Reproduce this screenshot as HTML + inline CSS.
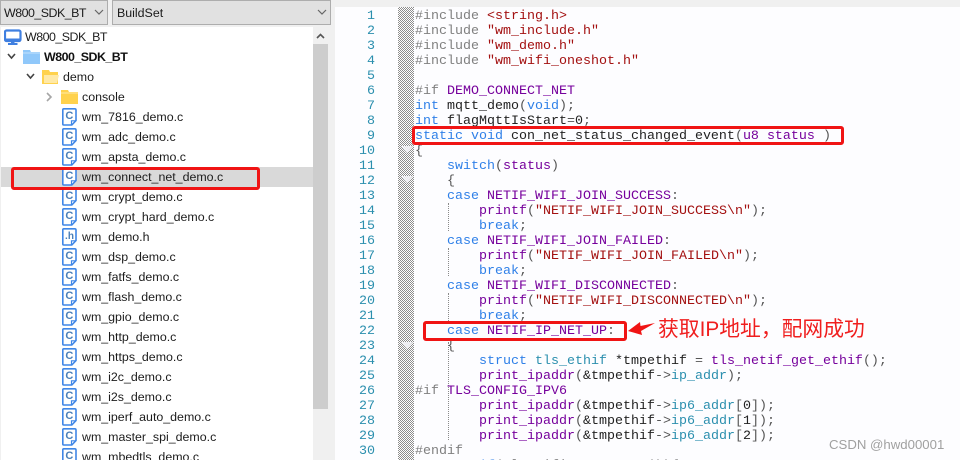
<!DOCTYPE html>
<html><head><meta charset="utf-8"><style>
html,body{margin:0;padding:0;overflow:hidden}
body{width:960px;height:460px;position:relative;overflow:hidden;background:#f0f0f0;font-family:"Liberation Sans","Noto Sans CJK SC",sans-serif}
.a{position:absolute}
.dd{position:absolute;top:0;height:23px;background:#e1e1e1;border:1px solid #adadad;font-size:12.4px;line-height:25px;color:#1a1a1a;box-sizing:content-box}
#tree{position:absolute;left:1px;top:27px;width:312px;height:433px;background:#fff}
.r{position:absolute;height:20px;line-height:22px;font-size:12.4px;color:#1c1c1c;white-space:pre}
.u{letter-spacing:-.5px}
.i{position:absolute;left:62px;width:15px;height:18px}
#ed{position:absolute;left:335px;top:7px;width:625px;height:453px;background:#fdfdff}
#hatch{position:absolute;left:398px;top:7px;width:16px;height:453px;background:repeating-conic-gradient(#8c8c8c 0 25%,#fff 0 50%) 0 0/2px 2px}
pre{margin:0;position:absolute;font-family:"Liberation Mono",monospace;font-size:13.33px;line-height:15px}
#nums{left:351px;top:9px;width:24px;text-align:right;color:#2b8fae}
#code{left:415px;top:9px;color:#222;height:451px;overflow:hidden;width:545px}
.p{color:#808080}.s{color:#a31010}.k{color:#2f80e8}.f{color:#76009c}.m{color:#2b8fae}.g{color:#555}
.b{position:absolute;border:3px solid #f01414;border-radius:3px;box-sizing:border-box}
.d{position:absolute;left:448px;width:0;border-left:1px dotted #8a8a8a}
.t{position:absolute;left:401px;width:0;height:0;border-left:6px solid transparent;border-right:6px solid transparent;border-top:7px solid #efeff3}
</style></head><body>
<svg width="0" height="0" style="position:absolute"><defs>
<symbol id="fc" viewBox="0 0 15 18"><path d="M1.800 .8H12.700Q14 .8 14 2.100V12.500L9.800 17H1.800Q.8 17 .8 16V1.800Q.8 .8 1.800 .8Z" fill="#fff" stroke="#3f86e6" stroke-width="1.600"/><path d="M9.500 16.800V12.800H13.800" fill="none" stroke="#3f86e6" stroke-width="1.200"/><text x="7.400" y="11" font-family="Liberation Sans" font-size="11" font-weight="bold" fill="#4a7fb8" text-anchor="middle">C</text></symbol>
<symbol id="fh" viewBox="0 0 15 18"><path d="M1.800 .8H12.700Q14 .8 14 2.100V12.500L9.800 17H1.800Q.8 17 .8 16V1.800Q.8 .8 1.800 .8Z" fill="#fff" stroke="#3f86e6" stroke-width="1.600"/><path d="M9.500 16.800V12.800H13.800" fill="none" stroke="#3f86e6" stroke-width="1.200"/><text x="7.500" y="11" font-family="Liberation Sans" font-size="10" font-weight="bold" fill="#4a7fb8" text-anchor="middle">.h</text></symbol>
</defs></svg>

<div class="dd u" style="left:0;width:106px;text-indent:3px">W800_SDK_BT</div>
<svg class="a" style="left:94px;top:9px" width="10" height="7"><path d="M1 1L5 5L9 1" fill="none" stroke="#666" stroke-width="1.2"/></svg>
<div class="dd" style="left:112px;width:217px;text-indent:4px">BuildSet</div>
<svg class="a" style="left:317px;top:9px" width="10" height="7"><path d="M1 1L5 5L9 1" fill="none" stroke="#666" stroke-width="1.2"/></svg>

<div id="tree"></div>
<div class="a" style="left:1px;top:167px;width:312px;height:20px;background:#d9d9d9"></div>
<div class="a" style="left:313px;top:27px;width:15px;height:433px;background:#f0f0f0"></div>
<div class="a" style="left:313px;top:44px;width:15px;height:365px;background:#cdcdcd"></div>
<svg class="a" style="left:316px;top:33px" width="9" height="6"><path d="M1 5L4.500 1.500L8 5" fill="none" stroke="#555" stroke-width="1.600"/></svg>

<svg class="a" style="left:4px;top:29px" width="18" height="17"><rect x="1" y="1.500" width="15.500" height="10.500" rx="1.500" fill="#fff" stroke="#3f7fe0" stroke-width="2.200"/><rect x="1" y="9.500" width="15.500" height="3" fill="#3f7fe0"/><rect x="7" y="12" width="3.500" height="2.500" fill="#3f7fe0"/><rect x="4" y="14" width="9.500" height="2" fill="#3f7fe0"/></svg>
<div class="r u" style="left:25px;top:26px">W800_SDK_BT</div>

<svg class="a" style="left:7px;top:53px" width="9" height="7"><path d="M1 1L4.500 5L8 1" fill="none" stroke="#444" stroke-width="1.600"/></svg>
<svg class="a" style="left:23px;top:49px" width="17" height="15"><path d="M0 1H7L8 3H17V15H0Z" fill="#90c8fa"/><path d="M0 4H17" stroke="#c4e2fc"/></svg>
<div class="r u" style="left:44px;top:46px;font-weight:bold;color:#111">W800_SDK_BT</div>

<svg class="a" style="left:26px;top:73px" width="9" height="7"><path d="M1 1L4.500 5L8 1" fill="none" stroke="#444" stroke-width="1.600"/></svg>
<svg class="a" style="left:42px;top:69px" width="17" height="15"><path d="M0 1H7L8 3H16V15H0Z" fill="#ffd24d"/><path d="M2 6H17L15 14H2Z" fill="#ffe9a6"/></svg>
<div class="r" style="left:63px;top:66px">demo</div>

<svg class="a" style="left:46px;top:92px" width="7" height="10"><path d="M1 1L5 5L1 9" fill="none" stroke="#a6a6a6" stroke-width="1.600"/></svg>
<svg class="a" style="left:61px;top:89px" width="17" height="15"><path d="M0 1H7L8 3H17V15H0Z" fill="#ffd24d"/><path d="M0 4H17" stroke="#ffe9a6"/></svg>
<div class="r" style="left:82px;top:86px">console</div>

<svg class="i" style="top:108px"><use href="#fc"/></svg><div class="r" style="left:82px;top:106px">wm_7816_demo.c</div>
<svg class="i" style="top:128px"><use href="#fc"/></svg><div class="r" style="left:82px;top:126px">wm_adc_demo.c</div>
<svg class="i" style="top:148px"><use href="#fc"/></svg><div class="r" style="left:82px;top:146px">wm_apsta_demo.c</div>
<svg class="i" style="top:168px"><use href="#fc"/></svg><div class="r" style="left:82px;top:166px">wm_connect_net_demo.c</div>
<svg class="i" style="top:188px"><use href="#fc"/></svg><div class="r" style="left:82px;top:186px">wm_crypt_demo.c</div>
<svg class="i" style="top:208px"><use href="#fc"/></svg><div class="r" style="left:82px;top:206px">wm_crypt_hard_demo.c</div>
<svg class="i" style="top:228px"><use href="#fh"/></svg><div class="r" style="left:82px;top:226px">wm_demo.h</div>
<svg class="i" style="top:248px"><use href="#fc"/></svg><div class="r" style="left:82px;top:246px">wm_dsp_demo.c</div>
<svg class="i" style="top:268px"><use href="#fc"/></svg><div class="r" style="left:82px;top:266px">wm_fatfs_demo.c</div>
<svg class="i" style="top:288px"><use href="#fc"/></svg><div class="r" style="left:82px;top:286px">wm_flash_demo.c</div>
<svg class="i" style="top:308px"><use href="#fc"/></svg><div class="r" style="left:82px;top:306px">wm_gpio_demo.c</div>
<svg class="i" style="top:328px"><use href="#fc"/></svg><div class="r" style="left:82px;top:326px">wm_http_demo.c</div>
<svg class="i" style="top:348px"><use href="#fc"/></svg><div class="r" style="left:82px;top:346px">wm_https_demo.c</div>
<svg class="i" style="top:368px"><use href="#fc"/></svg><div class="r" style="left:82px;top:366px">wm_i2c_demo.c</div>
<svg class="i" style="top:388px"><use href="#fc"/></svg><div class="r" style="left:82px;top:386px">wm_i2s_demo.c</div>
<svg class="i" style="top:408px"><use href="#fc"/></svg><div class="r" style="left:82px;top:406px">wm_iperf_auto_demo.c</div>
<svg class="i" style="top:428px"><use href="#fc"/></svg><div class="r" style="left:82px;top:426px">wm_master_spi_demo.c</div>
<svg class="i" style="top:448px"><use href="#fc"/></svg><div class="r" style="left:82px;top:446px">wm_mbedtls_demo.c</div>

<div class="b" style="left:11px;top:167px;width:249px;height:23px"></div>

<div id="ed"></div>
<div id="hatch"></div>
<div class="t" style="top:146px"></div>
<div class="t" style="top:176px"></div>
<div class="t" style="top:342px"></div>

<pre id="nums">1
2
3
4
5
6
7
8
9
10
11
12
13
14
15
16
17
18
19
20
21
22
23
24
25
26
27
28
29
30</pre>

<div class="d" style="top:203px;height:28px"></div>
<div class="d" style="top:248px;height:28px"></div>
<div class="d" style="top:293px;height:28px"></div>
<div class="d" style="top:342px;height:98px"></div>

<pre id="code"><span class="p">#include </span><span class="s">&lt;string.h&gt;</span>
<span class="p">#include </span><span class="s">"wm_include.h"</span>
<span class="p">#include </span><span class="s">"wm_demo.h"</span>
<span class="p">#include </span><span class="s">"wm_wifi_oneshot.h"</span>

<span class="p">#if </span><span class="f">DEMO_CONNECT_NET</span>
<span class="k">int</span> mqtt_demo<span class="g">(</span><span class="k">void</span><span class="g">);</span>
<span class="k">int</span> flagMqttIsStart<span class="g">=</span>0<span class="g">;</span>
<span class="k">static void</span> con_net_status_changed_event<span class="g">(</span><span class="f">u8</span> <span class="f">status</span> <span class="g">)</span>
<span class="g">{</span>
    <span class="k">switch</span><span class="g">(</span><span class="f">status</span><span class="g">)</span>
    <span class="g">{</span>
    <span class="k">case</span> <span class="f">NETIF_WIFI_JOIN_SUCCESS</span><span class="g">:</span>
        <span class="f">printf</span><span class="g">(</span><span class="s">"NETIF_WIFI_JOIN_SUCCESS\n"</span><span class="g">);</span>
        <span class="k">break</span><span class="g">;</span>
    <span class="k">case</span> <span class="f">NETIF_WIFI_JOIN_FAILED</span><span class="g">:</span>
        <span class="f">printf</span><span class="g">(</span><span class="s">"NETIF_WIFI_JOIN_FAILED\n"</span><span class="g">);</span>
        <span class="k">break</span><span class="g">;</span>
    <span class="k">case</span> <span class="f">NETIF_WIFI_DISCONNECTED</span><span class="g">:</span>
        <span class="f">printf</span><span class="g">(</span><span class="s">"NETIF_WIFI_DISCONNECTED\n"</span><span class="g">);</span>
        <span class="k">break</span><span class="g">;</span>
    <span class="k">case</span> <span class="f">NETIF_IP_NET_UP</span><span class="g">:</span>
    <span class="g">{</span>
        <span class="k">struct</span> <span class="m">tls_ethif</span> *tmpethif <span class="g">=</span> <span class="f">tls_netif_get_ethif</span><span class="g">();</span>
        <span class="f">print_ipaddr</span><span class="g">(</span>&amp;tmpethif<span class="g">-&gt;</span><span class="m">ip_addr</span><span class="g">);</span>
<span class="p">#if </span><span class="f">TLS_CONFIG_IPV6</span>
        <span class="f">print_ipaddr</span><span class="g">(</span>&amp;tmpethif<span class="g">-&gt;</span><span class="m">ip6_addr</span><span class="g">[</span>0<span class="g">]);</span>
        <span class="f">print_ipaddr</span><span class="g">(</span>&amp;tmpethif<span class="g">-&gt;</span><span class="m">ip6_addr</span><span class="g">[</span>1<span class="g">]);</span>
        <span class="f">print_ipaddr</span><span class="g">(</span>&amp;tmpethif<span class="g">-&gt;</span><span class="m">ip6_addr</span><span class="g">[</span>2<span class="g">]);</span>
<span class="p">#endif</span>
        <span class="k">if</span><span class="g">(</span>tls_wifi_get_state<span class="g">()){</span></pre>

<div class="b" style="left:412px;top:126px;width:432px;height:19px"></div>
<div class="b" style="left:423px;top:321px;width:204px;height:20px"></div>

<svg class="a" style="left:626px;top:318px" width="30" height="20"><path d="M2 13L14 4L14.500 8L29 5L15 13L16 17Z" fill="#f01414"/></svg>
<div class="a" style="left:658px;top:317px;font-size:20.800px;line-height:26px;color:#f01e1e;white-space:pre;font-family:'Liberation Sans','Noto Sans CJK SC',sans-serif">获取IP地址&#65292;配网成功</div>
<div class="a" style="left:829px;top:437px;font-size:13.200px;line-height:16px;color:#a0a0a0;white-space:pre">CSDN @hwd00001</div>
</body></html>
